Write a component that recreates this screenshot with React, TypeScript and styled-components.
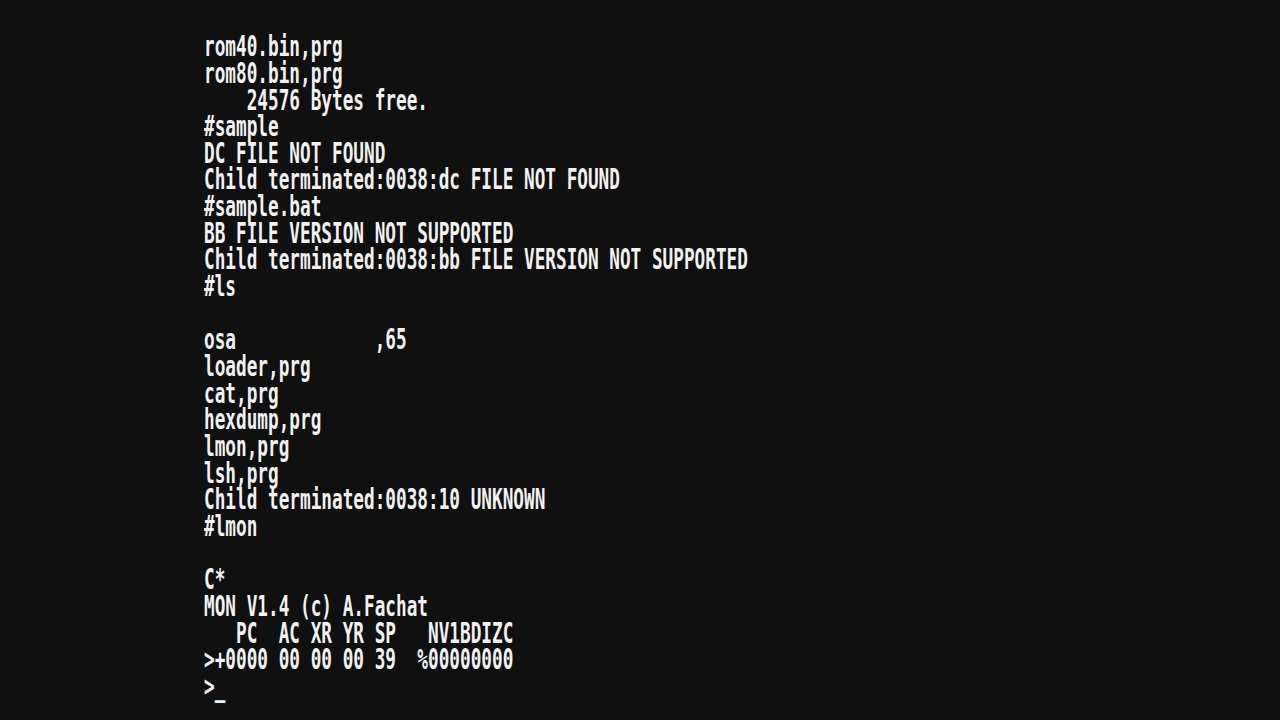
import React from "react";
import styled, { createGlobalStyle } from "styled-components";

const Global = createGlobalStyle`
  html, body {
    margin: 0;
    padding: 0;
    background: #101010;
    width: 1280px;
    height: 720px;
    overflow: hidden;
  }
`;

const Page = styled.main`
  width: 1280px;
  height: 720px;
  box-sizing: border-box;
  background: #101010;
  padding: 33.2px 0 0 204px;
  overflow: hidden;
`;

const Screen = styled.div`
  transform: scaleX(0.61518);
  transform-origin: 0 0;
  font-family: "DejaVu Sans Mono", "Liberation Mono", monospace;
  font-weight: bold;
  font-size: 28.8px;
  line-height: 26.6667px;
  color: #f2f2f2;
  width: 1400px;
`;

const Line = styled.div`
  white-space: pre;
  height: 26.6667px;
`;

const lines = [
  "rom40.bin,prg",
  "rom80.bin,prg",
  "    24576 Bytes free.",
  "#sample",
  "DC FILE NOT FOUND",
  "Child terminated:0038:dc FILE NOT FOUND",
  "#sample.bat",
  "BB FILE VERSION NOT SUPPORTED",
  "Child terminated:0038:bb FILE VERSION NOT SUPPORTED",
  "#ls",
  "",
  "osa             ,65",
  "loader,prg",
  "cat,prg",
  "hexdump,prg",
  "lmon,prg",
  "lsh,prg",
  "Child terminated:0038:10 UNKNOWN",
  "#lmon",
  "",
  "C*",
  "MON V1.4 (c) A.Fachat",
  "   PC  AC XR YR SP   NV1BDIZC",
  ">+0000 00 00 00 39  %00000000",
  ">_",
];

export default function App() {
  return (
    <>
      <Global />
      <Page>
        <Screen>
          {lines.map((l, i) => (
            <Line key={i}>{l}</Line>
          ))}
        </Screen>
      </Page>
    </>
  );
}
